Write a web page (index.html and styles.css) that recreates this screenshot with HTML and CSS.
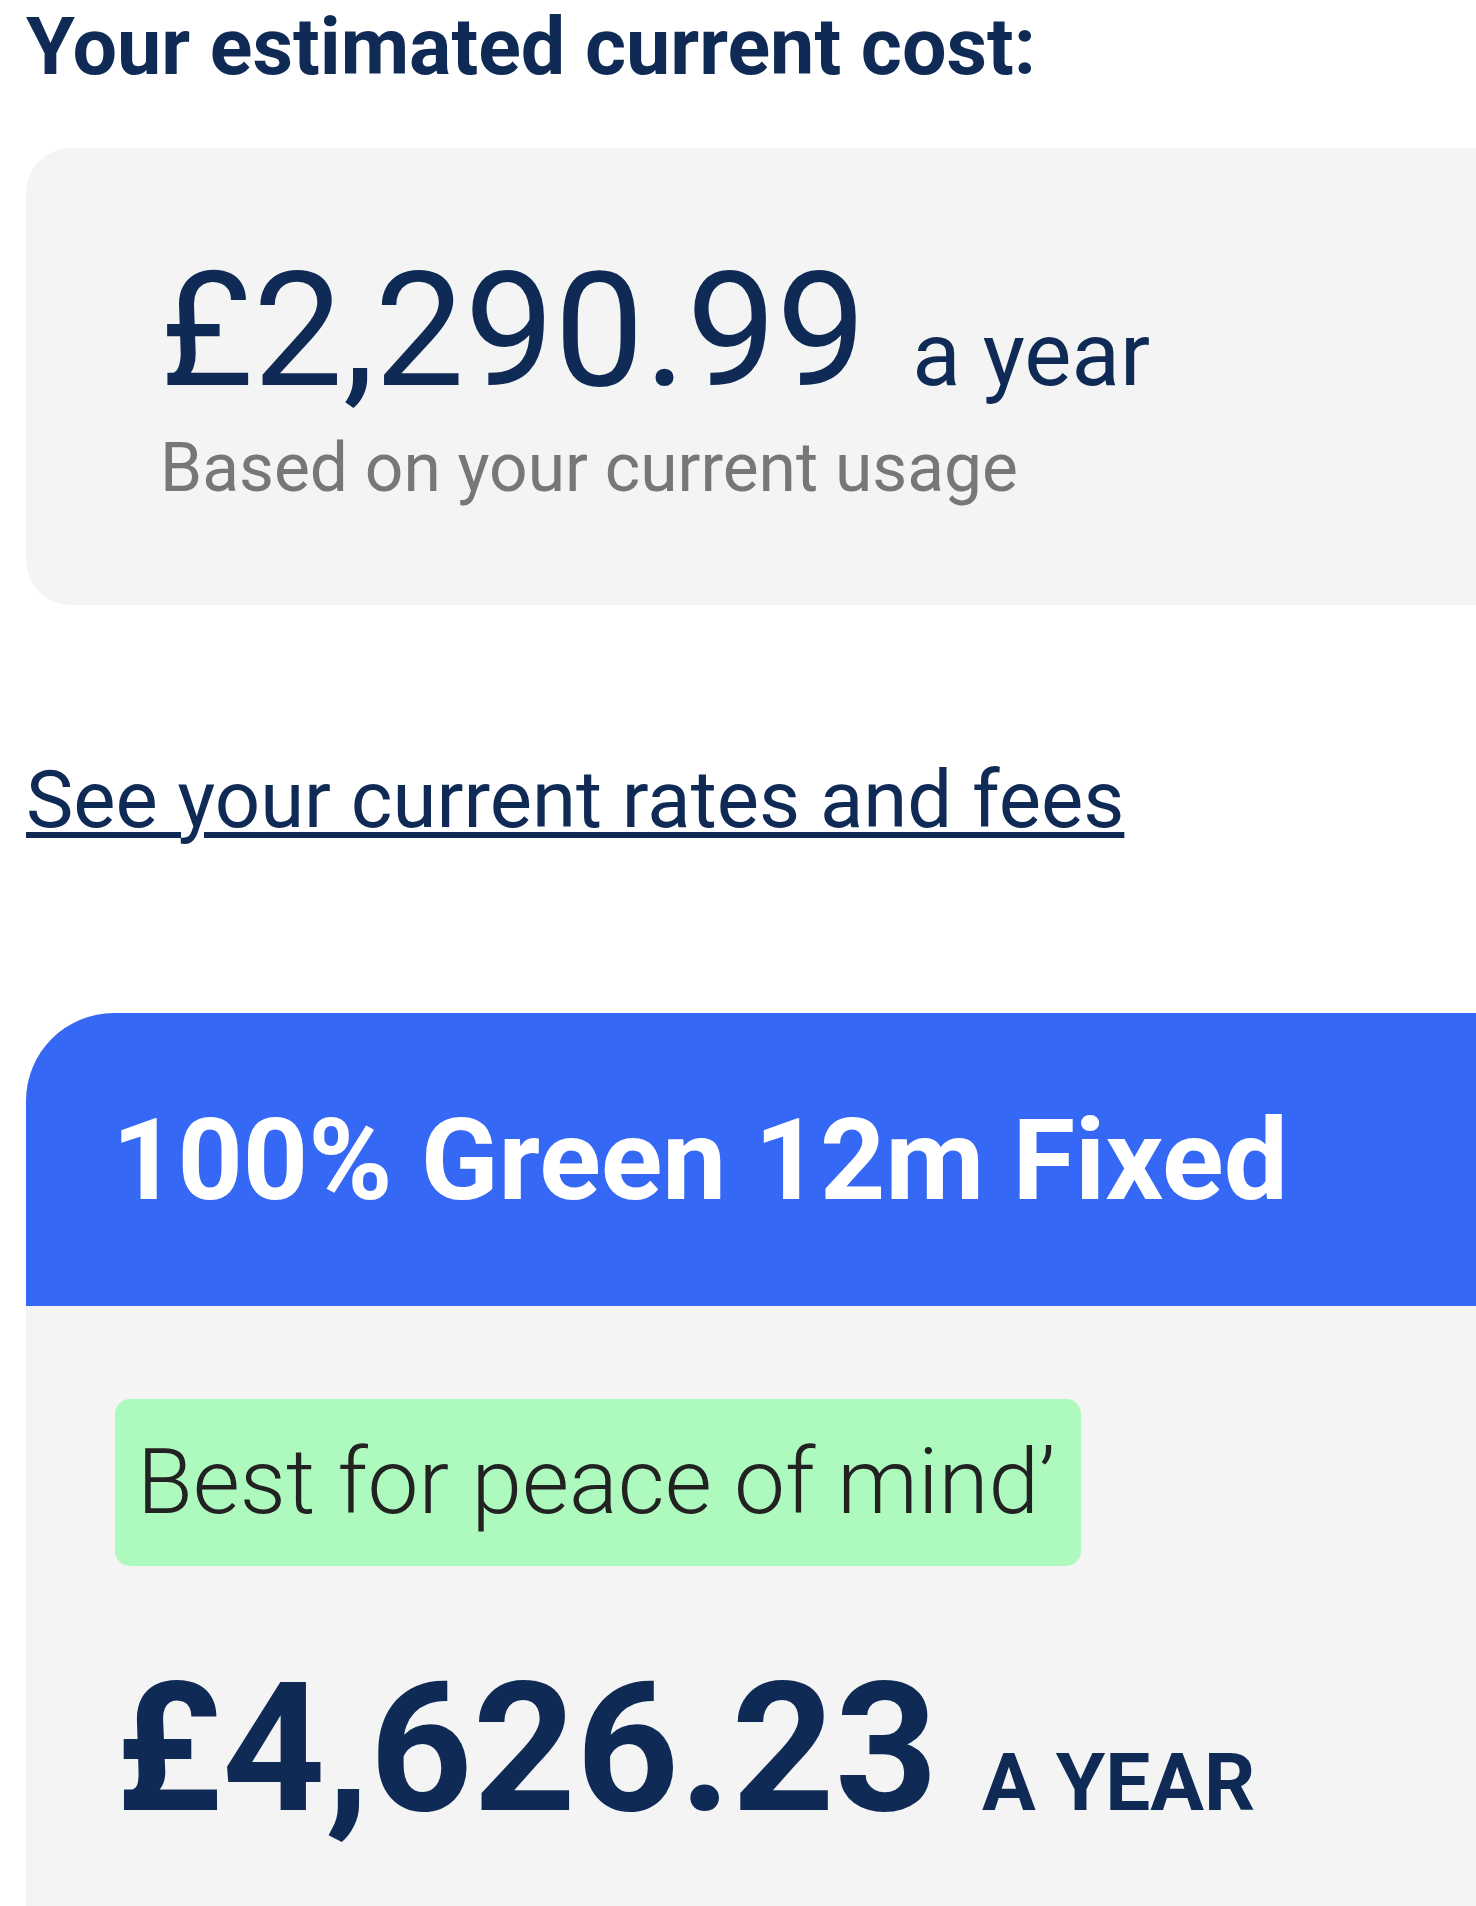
FILE: index.html
```html
<!DOCTYPE html>
<html lang="en">
<head>
<meta charset="utf-8">
<title>Your estimated current cost</title>
<link rel="stylesheet" href="styles.css">
</head>
<body>
<main class="page">
  <h1 class="heading">Your estimated current cost:</h1>

  <section class="current-card">
    <div class="price-row">
      <span class="price">£2,290.99</span>
      <span class="per">a year</span>
    </div>
    <p class="note">Based on your current usage</p>
  </section>

  <a class="rates-link" href="#">See your current rates and fees</a>

  <section class="plan-card">
    <header class="plan-header">
      <h2 class="plan-title">100% Green 12m Fixed</h2>
    </header>
    <div class="plan-body">
      <span class="badge">Best for peace of mind’</span>
      <div class="plan-price-row">
        <span class="plan-price">£4,626.23</span>
        <span class="plan-per">a year</span>
      </div>
    </div>
  </section>
</main>
</body>
</html>
```

FILE: styles.css
```css
html, body {
  margin: 0;
  padding: 0;
  background: #ffffff;
  overflow: hidden;
}

body {
  font-family: Roboto, "Liberation Sans", Arial, sans-serif;
  color: #0f2a55;
}

.page {
  padding-left: 26px;
  width: 1600px;
}

.heading {
  margin: 0;
  font-size: 79px;
  font-weight: 700;
  line-height: 94px;
  color: #0f2a55;
}

.current-card {
  margin-top: 54px;
  background: #f4f4f4;
  border-radius: 45px;
  padding: 103px 0 102px 134px;
}

.price-row {
  display: flex;
  align-items: baseline;
}

.price {
  font-size: 160px;
  line-height: 1;
  font-weight: 400;
  color: #0f2a55;
}

.per {
  margin-left: 46px;
  font-size: 89px;
  line-height: 1;
  font-weight: 400;
  color: #0f2a55;
}

.note {
  margin: 24px 0 0;
  font-size: 67.7px;
  line-height: 1;
  font-weight: 400;
  color: #777777;
}

.rates-link {
  display: inline-block;
  margin-top: 155px;
  font-size: 79.7px;
  line-height: 1;
  font-weight: 400;
  color: #0f2a55;
  text-decoration: underline;
  text-decoration-thickness: 6px;
  text-underline-offset: 5px;
}

.plan-card {
  margin-top: 174px;
  border-radius: 88px 0 0 0;
  overflow: hidden;
  background: #f4f4f4;
}

.plan-header {
  background: #3568f5;
  height: 293px;
  display: flex;
  align-items: center;
  padding-left: 86px;
}

.plan-title {
  margin: 0;
  font-size: 114px;
  line-height: 1;
  font-weight: 700;
  color: #ffffff;
}

.plan-body {
  padding: 93px 0 80px 89px;
}

.badge {
  display: inline-block;
  background: #adf9be;
  border-radius: 15px;
  padding: 38px 26px 38px 22px;
  font-size: 91px;
  line-height: 1;
  font-weight: 300;
  color: #222222;
}

.plan-price-row {
  display: flex;
  align-items: baseline;
  margin-top: 93px;
}

.plan-price {
  font-size: 180px;
  line-height: 1;
  font-weight: 700;
  color: #0f2a55;
}

.plan-per {
  margin-left: 44px;
  font-size: 80px;
  line-height: 1;
  font-weight: 700;
  text-transform: uppercase;
  color: #0f2a55;
}
```
